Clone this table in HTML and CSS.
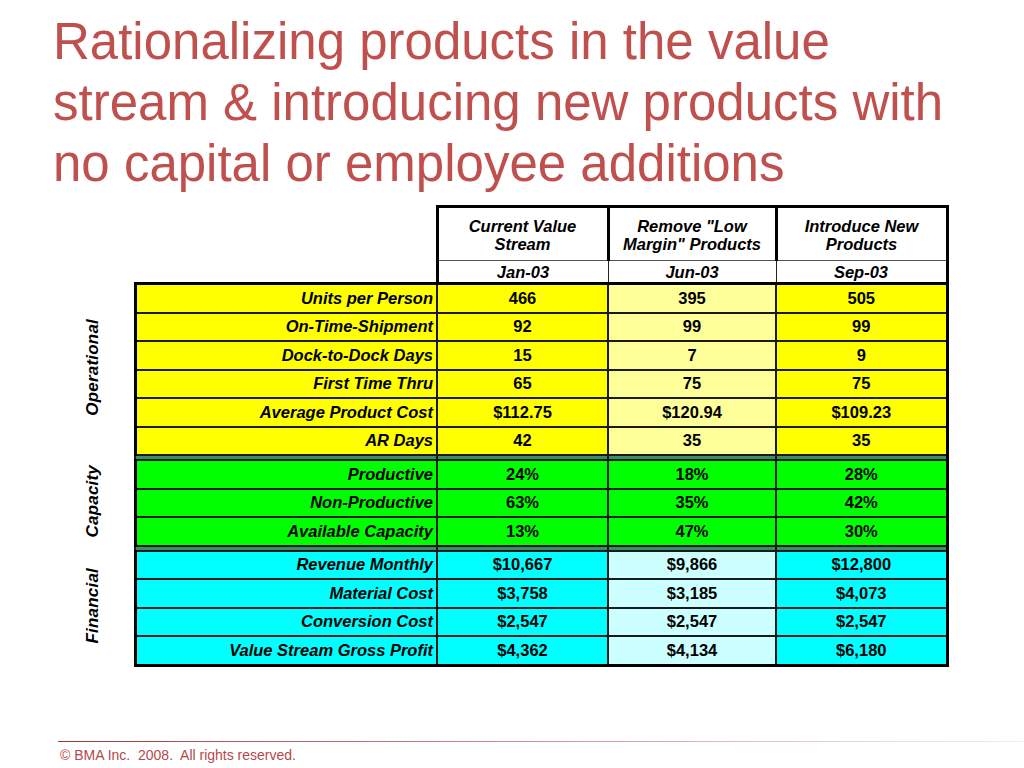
FILE: index.html
```html
<!DOCTYPE html>
<html>
<head>
<meta charset="utf-8">
<link rel="stylesheet" href="styles.css">
</head>
<body>
<h1 class="title">Rationalizing products in the value<br>stream &amp; introducing new products with<br>no capital or employee additions</h1>
<table class="metrics">
  <colgroup>
    <col class="c-side"><col class="c-label"><col class="c-v1"><col class="c-v2"><col class="c-v3">
  </colgroup>
  <thead>
    <tr class="h-names">
      <th class="blank"></th><th class="blank"></th>
      <th>Current Value<br>Stream</th>
      <th>Remove "Low<br>Margin" Products</th>
      <th>Introduce New<br>Products</th>
    </tr>
    <tr class="h-dates">
      <th class="blank"></th><th class="blank"></th>
      <th>Jan-03</th><th>Jun-03</th><th>Sep-03</th>
    </tr>
  </thead>
  <tbody class="op">
    <tr class="first"><td class="side" rowspan="6"><span>Operational</span></td><td class="lbl">Units per Person</td><td>466</td><td class="mid">395</td><td>505</td></tr>
    <tr><td class="lbl">On-Time-Shipment</td><td>92</td><td class="mid">99</td><td>99</td></tr>
    <tr><td class="lbl">Dock-to-Dock Days</td><td>15</td><td class="mid">7</td><td>9</td></tr>
    <tr><td class="lbl">First Time Thru</td><td>65</td><td class="mid">75</td><td>75</td></tr>
    <tr><td class="lbl">Average Product Cost</td><td>$112.75</td><td class="mid">$120.94</td><td>$109.23</td></tr>
    <tr><td class="lbl">AR Days</td><td>42</td><td class="mid">35</td><td>35</td></tr>
    <tr class="sep"><td class="side-gap"></td><td></td><td></td><td></td><td></td></tr>
  </tbody>
  <tbody class="cap">
    <tr><td class="side" rowspan="3"><span>Capacity</span></td><td class="lbl">Productive</td><td>24%</td><td class="mid">18%</td><td>28%</td></tr>
    <tr><td class="lbl">Non-Productive</td><td>63%</td><td class="mid">35%</td><td>42%</td></tr>
    <tr><td class="lbl">Available Capacity</td><td>13%</td><td class="mid">47%</td><td>30%</td></tr>
    <tr class="sep"><td class="side-gap"></td><td></td><td></td><td></td><td></td></tr>
  </tbody>
  <tbody class="fin">
    <tr><td class="side" rowspan="4"><span>Financial</span></td><td class="lbl">Revenue Monthly</td><td>$10,667</td><td class="mid">$9,866</td><td>$12,800</td></tr>
    <tr><td class="lbl">Material Cost</td><td>$3,758</td><td class="mid">$3,185</td><td>$4,073</td></tr>
    <tr><td class="lbl">Conversion Cost</td><td>$2,547</td><td class="mid">$2,547</td><td>$2,547</td></tr>
    <tr class="last"><td class="lbl">Value Stream Gross Profit</td><td>$4,362</td><td class="mid">$4,134</td><td>$6,180</td></tr>
  </tbody>
</table>
<footer class="footer">
  <div class="rule"></div>
  <div class="copy">© BMA Inc.&nbsp; 2008.&nbsp; All rights reserved.</div>
</footer>
</body>
</html>
```

FILE: styles.css
```css
html, body {
  margin: 0;
  padding: 0;
  background: #ffffff;
}
body {
  width: 1024px;
  height: 768px;
  display: flex;
  flex-direction: column;
  font-family: "Liberation Sans", Arial, sans-serif;
  overflow: hidden;
}
.title {
  margin: 11px 0 0 53px;
  font-weight: normal;
  font-size: 51px;
  line-height: 61px;
  color: #c0504d;
}
.metrics {
  margin: 11px 0 0 74px;
  width: 873px;
  table-layout: fixed;
  border-collapse: collapse;
  font-weight: bold;
  font-size: 16.5px;
  color: #000;
}
.c-side { width: 61px; }
.c-label { width: 302px; }
.c-v1 { width: 171px; }
.c-v2 { width: 168px; }
.c-v3 { width: 171px; }

.metrics th {
  font-weight: bold;
  font-style: italic;
  border-left: 3px solid #000;
  border-right: 3px solid #000;
  padding: 0;
  line-height: 18px;
  background: #fff;
}
.metrics th.blank {
  border: none;
}
.h-names th {
  border-top: 3px solid #000;
  border-bottom: 1px solid #555;
  height: 50px;
  vertical-align: middle;
  padding-top: 2px;
}
.h-names th.blank, .h-dates th.blank { border: none; }
.h-dates th {
  height: 21px;
  vertical-align: middle;
  border-left: 1px solid #222;
  border-right: 1px solid #222;
}
.h-dates th:nth-child(3) { border-left: 3px solid #000; }
.h-dates th:nth-child(5) { border-right: 3px solid #000; }

.metrics td {
  padding: 0 3px;
  height: 26.5px;
  text-align: center;
  vertical-align: middle;
  border: 2px solid #1a1a1a;
  white-space: nowrap;
}
.metrics td:last-child { border-right: 3px solid #000; }
.metrics td.lbl {
  text-align: right;
  font-style: italic;
  border-left: 3px solid #000;
}
.op tr.first td { border-top: 3px solid #000; }
.metrics td.side, .metrics td.side-gap,
.op tr.first td.side {
  border: none;
  background: #fff;
  text-align: center;
  padding: 0 21px 0 0;
}
.metrics td.side span {
  display: inline-block;
  writing-mode: vertical-rl;
  transform: rotate(180deg);
  font-size: 17px;
  font-weight: bold;
  font-style: italic;
  letter-spacing: 0.2px;
}
.metrics .sep td {
  height: 3px;
  padding: 0;
  background: #3b8f68;
  border-top: 2px solid #1a1a1a;
  border-bottom: 2px solid #1a1a1a;
}
.metrics .sep td.side-gap {
  background: #fff;
  border: none;
}
.metrics tr.last td { border-bottom: 3px solid #000; }

.op td { background: #ffff00; }
.op td.mid { background: #ffff99; }
.cap td { background: #00ff00; }
.fin td { background: #00ffff; }
.fin td.mid { background: #ccffff; }

.footer {
  margin-top: auto;
  padding: 0 0 5px 58px;
}
.rule {
  height: 1px;
  background: linear-gradient(to right, #9e3b3b, #c98a8a 45%, #eadada 85%, #f4ecec);
}
.copy {
  margin: 5px 0 0 2px;
  font-size: 14px;
  line-height: 16px;
  color: #b5474a;
}
```
